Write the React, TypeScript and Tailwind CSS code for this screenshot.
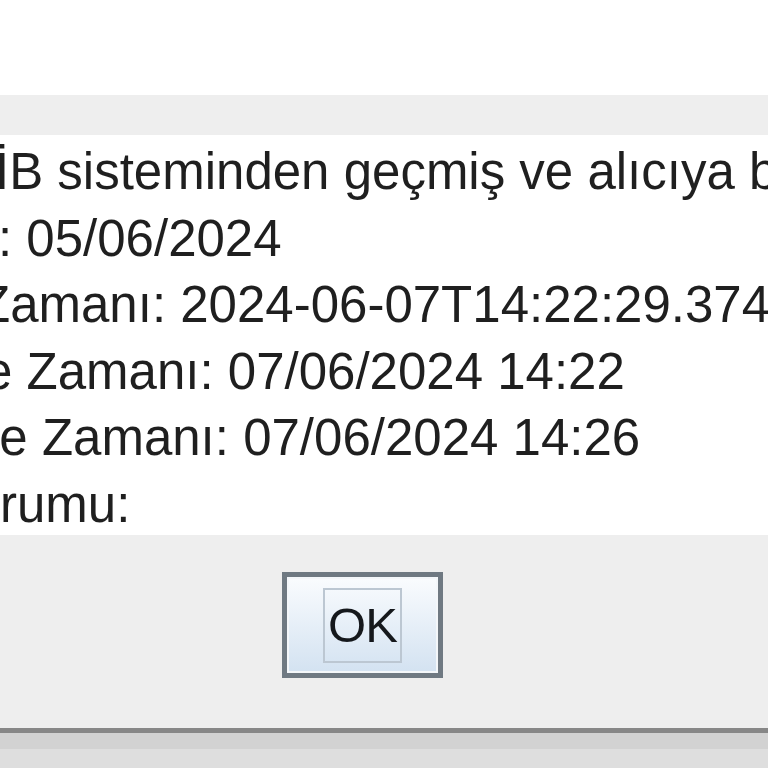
const lines: { text: string; offset: string }[] = [
  { text: "İB sisteminden geçmiş ve alıcıya başarıyla ulaşmıştır.", offset: "ml-[-5px]" },
  { text: ": 05/06/2024", offset: "ml-[-2px]" },
  { text: "Zamanı: 2024-06-07T14:22:29.374", offset: "ml-[-21px]" },
  { text: "e Zamanı: 07/06/2024 14:22", offset: "ml-[-16px]" },
  { text: "ne Zamanı: 07/06/2024 14:26", offset: "ml-[-29px]" },
  { text: "rumu:", offset: "ml-[0px]" },
];

const App = () => {
  return (
    <div
      className="w-[768px] h-[768px] overflow-hidden flex flex-col bg-white"
      style={{ fontFamily: '"Liberation Sans", Arial, sans-serif' }}
    >
      {/* top white */}
      <div className="h-[95px] bg-white shrink-0" />
      {/* grey band */}
      <div className="h-[40px] bg-[#eeeeee] shrink-0" />

      {/* message text */}
      <div className="h-[400px] shrink-0 bg-white overflow-hidden pt-[4px]">
        {lines.map((l) => (
          <div
            key={l.text}
            className={`${l.offset} whitespace-nowrap text-[51px] leading-[66.5px] text-[#1f1f1f]`}
          >
            {l.text}
          </div>
        ))}
      </div>

      {/* button area */}
      <div className="h-[193px] shrink-0 bg-[#eeeeee] pt-[37px] pl-[282px]">
        <button className="w-[161px] h-[106px] border-[5px] border-[#6f7982] bg-gradient-to-b from-[#fafcfe] to-[#d3e2f1] flex items-center justify-center shadow-[inset_0_0_0_2px_#f4f7fa]">
          <span className="w-[79px] h-[75px] border-2 border-[#bcc7d2] flex items-center justify-center text-[49px] leading-none text-[#15181c] tracking-[-1px]">
            OK
          </span>
        </button>
      </div>

      {/* bottom edge */}
      <div className="flex-1 border-t-[5px] border-[#878787] bg-[#d2d2d2] flex flex-col">
        <div className="h-[16px]" />
        <div className="flex-1 bg-[#dedede]" />
      </div>
    </div>
  );
};

export default App;
